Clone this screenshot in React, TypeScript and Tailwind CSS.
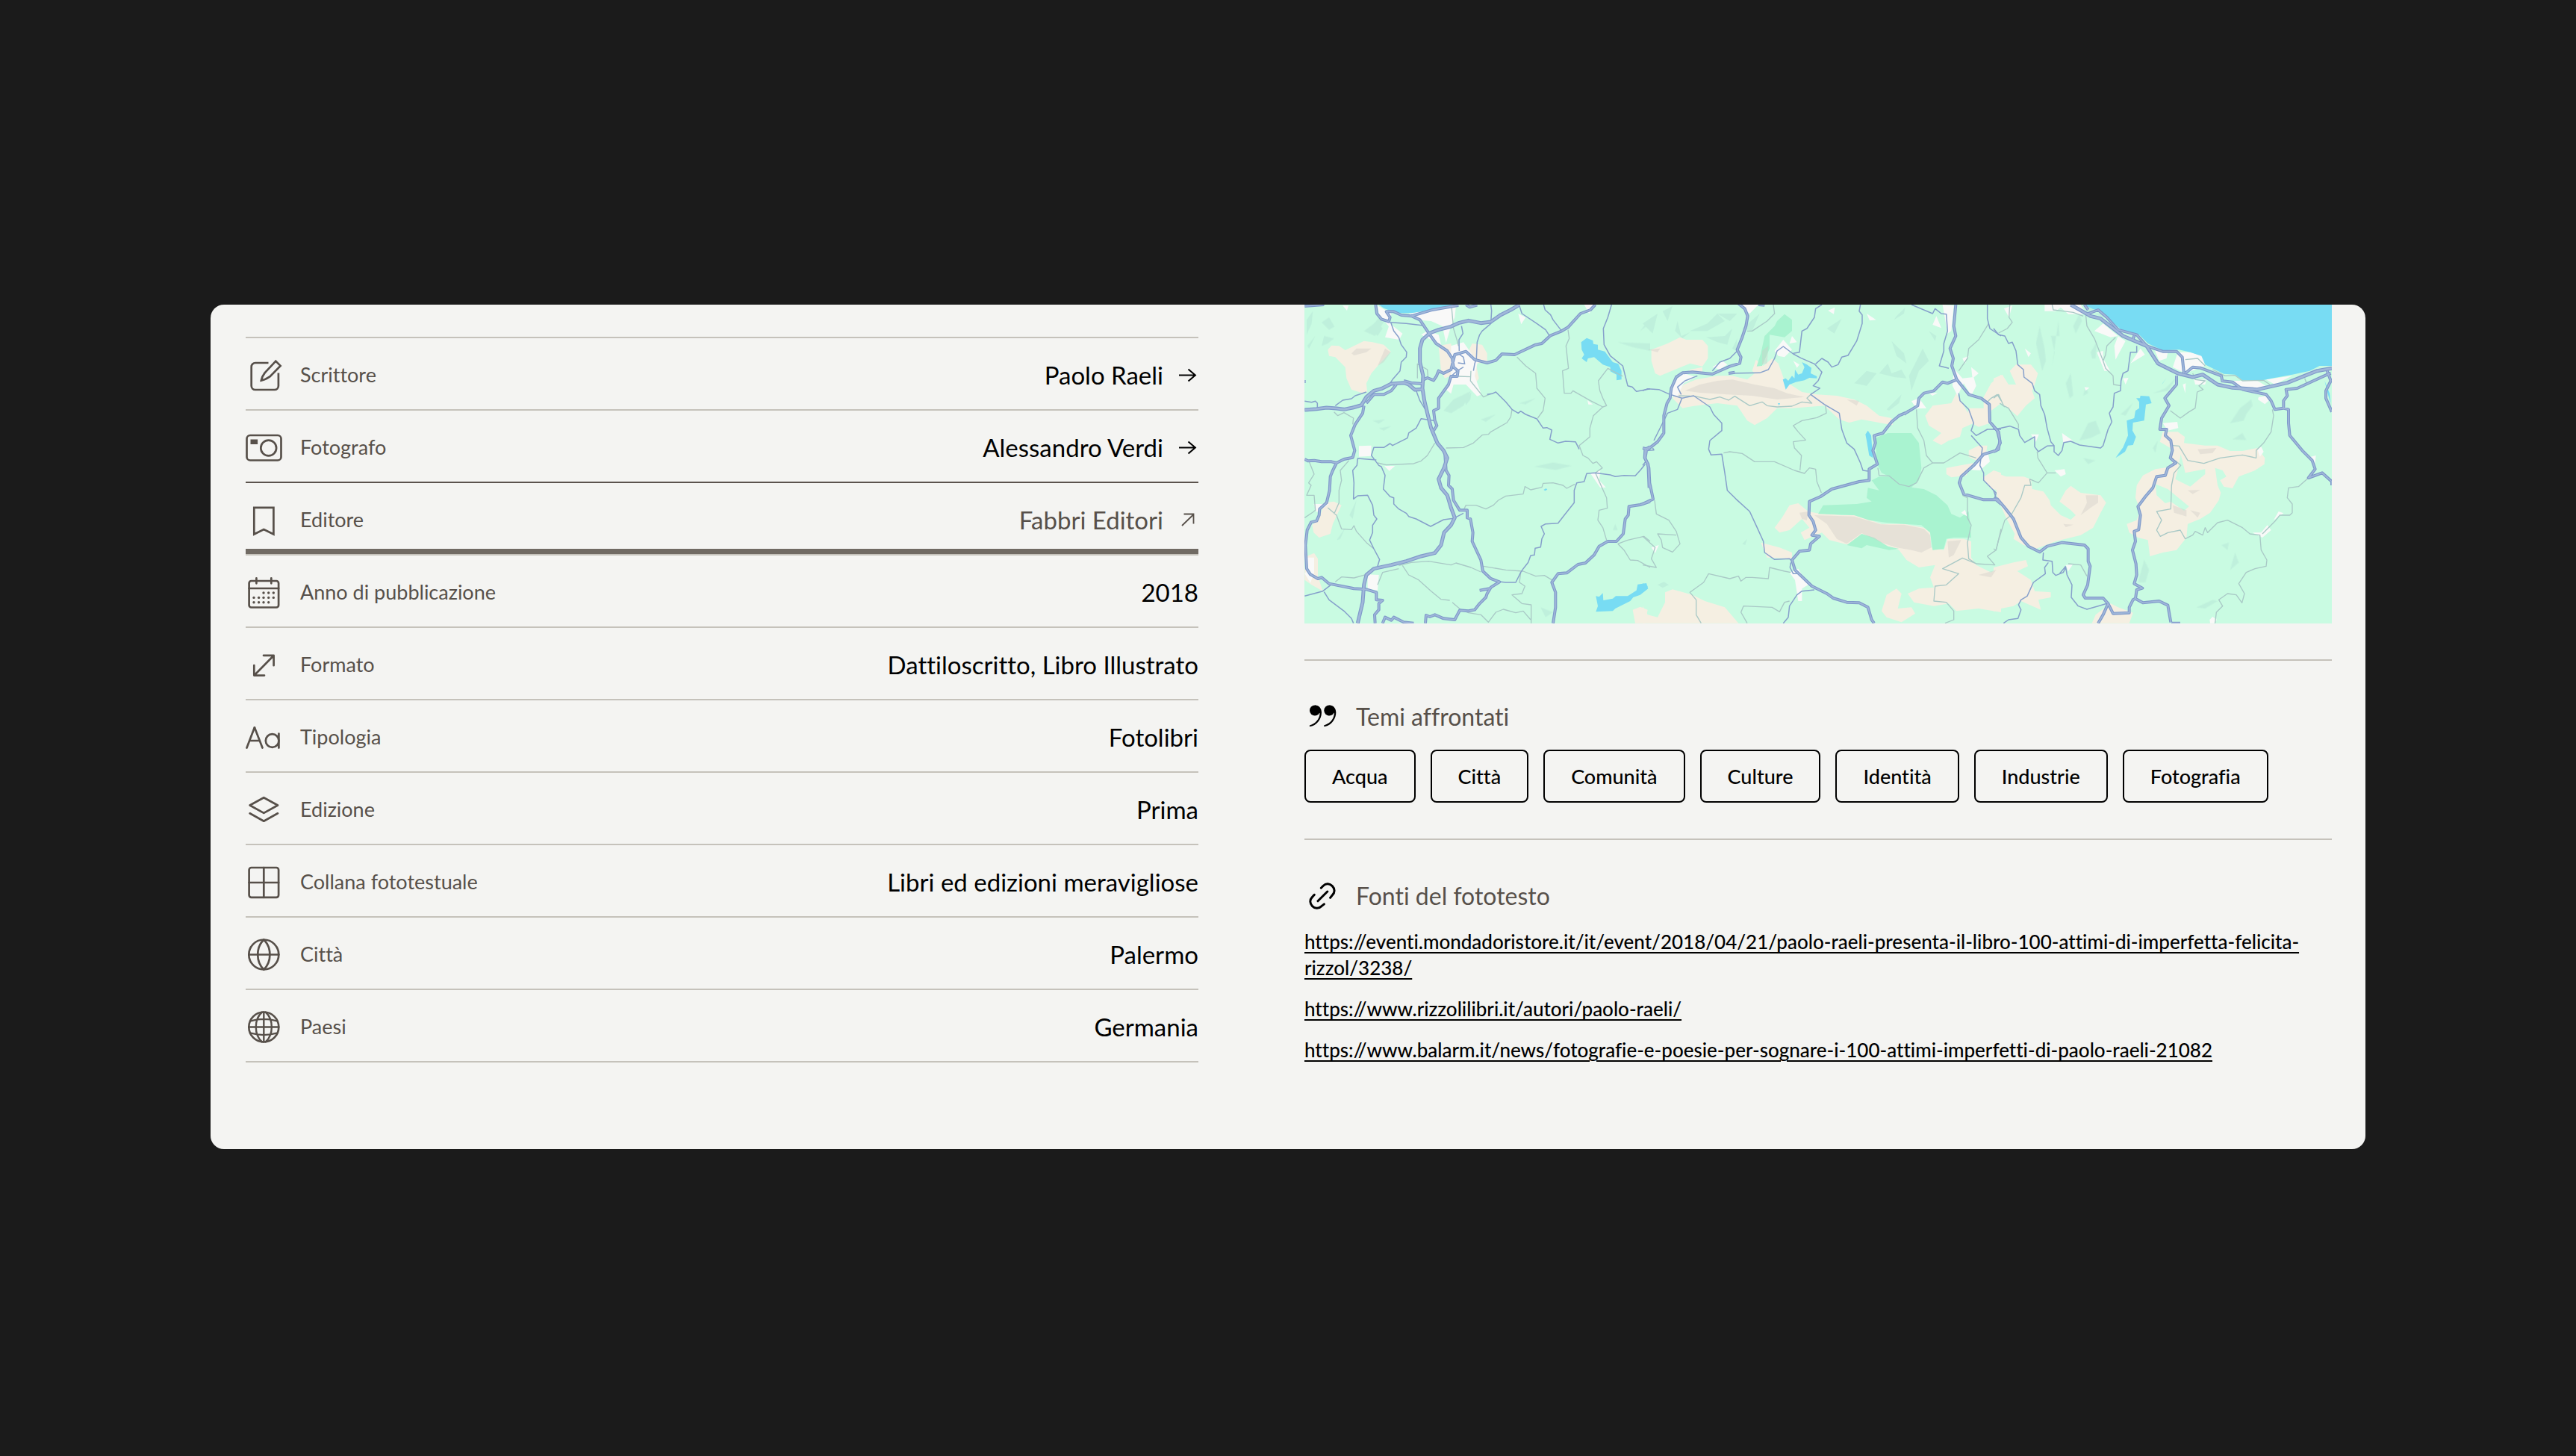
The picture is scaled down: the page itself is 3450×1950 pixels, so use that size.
import type { ReactNode } from "react";

/* ---------- row icons (49 x 49 box) ---------- */

function Icon({ children }: { children: ReactNode }) {
  return (
    <svg
      viewBox="0 0 49 49"
      className="size-[49px] shrink-0"
      fill="none"
      stroke="currentColor"
      strokeWidth="2.7"
      strokeLinecap="round"
      strokeLinejoin="round"
      aria-hidden="true"
    >
      {children}
    </svg>
  );
}

const EditIcon = () => (
  <Icon>
    <path d="M30.5 9H13a5.3 5.3 0 0 0-5.3 5.3v25.4A5.3 5.3 0 0 0 13 45h25.600a5.300 5.300 0 0 0 5.300-5.300V22.500" strokeLinecap="butt" />
    <path d="M20.800 32.600C21.300 29.500 23.300 25.500 25.600 22.400L40.300 6.600l6.300 6.300L32.400 27.400c-3.400 2.400-8 4.600-11.600 5.200Z" strokeLinejoin="miter" />
  </Icon>
);
const CameraIcon = () => (
  <Icon>
    <rect x="1.500" y="9" width="46" height="33.500" rx="4.600" />
    <rect x="6.500" y="14.500" width="9.600" height="6.500" fill="currentColor" stroke="none" />
    <circle cx="30.700" cy="26" r="10.400" />
  </Icon>
);
const BookmarkIcon = () => (
  <Icon>
    <path d="M11.300 8.900h26.100v35.600L24.300 38l-13 6.500Z" strokeLinejoin="miter" />
  </Icon>
);
const CalendarIcon = () => (
  <Icon>
    <rect x="4.600" y="10" width="39.500" height="35.500" rx="3" />
    <path d="M4.600 20h39.500M14.400 6.300v7M34.300 6.300v7" />
    <g fill="currentColor" stroke="none">
      {[
        [24, 26], [30.700, 26], [37.300, 26],
        [11, 32.400], [17.600, 32.400], [24, 32.400], [30.700, 32.400], [37.300, 32.400],
        [11, 38.800], [17.600, 38.800], [24, 38.800], [30.700, 38.800],
      ].map(([x, y]) => (
        <circle key={`${x}-${y}`} cx={x} cy={y} r="1.700" />
      ))}
    </g>
  </Icon>
);
const ResizeIcon = () => (
  <Icon>
    <path d="M11.500 39.500 37.500 13M24 12.800h13.600v13.400M25 39.600H11.300V26" />
  </Icon>
);
const TypeIcon = () => (
  <Icon>
    <line x1="1.500" y1="39.600" x2="11.900" y2="12.300" />
    <line x1="11.900" y1="12.300" x2="22.500" y2="39.600" />
    <line x1="5.500" y1="30" x2="18.500" y2="30" />
    <circle cx="35.600" cy="30" r="8.800" />
    <line x1="44.400" y1="20.500" x2="44.400" y2="39.600" />
  </Icon>
);
const LayersIcon = () => (
  <Icon>
    <path d="M24.300 9.200 43 19.500 24.300 29.900 5.600 19.500ZM5.600 30.300l18.700 10.400L43 30.300" />
  </Icon>
);
const GridIcon = () => (
  <Icon>
    <rect x="4.600" y="6" width="39.500" height="39.800" rx="3" />
    <path d="M24.300 6v39.800M4.600 26h39.500" />
  </Icon>
);
const GlobeIcon = () => (
  <Icon>
    <circle cx="24.300" cy="25.500" r="20" />
    <path d="M4.300 25.500h40M24.300 5.500C13.500 16 13.500 35 24.300 45.500M24.300 5.500C35.100 16 35.100 35 24.300 45.500" />
  </Icon>
);
const GlobeGridIcon = () => (
  <Icon>
    <circle cx="24.300" cy="25.500" r="20" />
    <path d="M4.300 25.500h40M24.300 5.500v40M22 5.500C11 15 11 36 22 45.500M26.600 5.500C37.600 15 37.600 36 26.600 45.500M7 17.300Q24.300 12.500 41.600 17.300M7 33.700Q24.300 38.500 41.600 33.700" strokeWidth="2.400" />
  </Icon>
);

function ArrowIcon({ external }: { external?: boolean }) {
  return (
    <svg viewBox="0 0 26 26" className="size-[26px] shrink-0" fill="none" stroke="currentColor" strokeWidth="2.100" aria-hidden="true">
      {external ? (
        <path d="M4 21 19.500 6M6.500 5.500h13v13" strokeWidth="1.800" />
      ) : (
        <path d="M0 13.500h22.500M12.500 5.500l9.300 8-9.300 8" />
      )}
    </svg>
  );
}

const QuoteIcon = () => (
  <svg viewBox="0 0 48 48" className="size-12 shrink-0" fill="currentColor" aria-hidden="true">
    {[0, 19.300].map((dx) => (
      <g key={dx} transform={`translate(${dx} 0)`}>
        <circle cx="14" cy="15.500" r="7" />
        <path d="M14 8.500c5.500 0 9 4 9 9.700C23 27.500 15.800 36 8 37c-1.600.200-1.800-1.400-.500-1.700C14.500 33 20 27.500 20.600 19.500Z" />
      </g>
    ))}
  </svg>
);
const LinkIcon = () => (
  <svg viewBox="0 0 48 48" className="size-12 shrink-0" fill="none" stroke="currentColor" strokeWidth="3" strokeLinecap="round" aria-hidden="true">
    <path d="M18 30.800 30.800 18M22.300 13.300l3-3c3.600-3.600 8.700-3 12 .300s3.900 8.400.300 12l-3 3.800M13.300 22.300l-3 3.300c-3.600 3.600-3 8.700.300 12s8.400 3.900 12 .300l3.800-3" />
  </svg>
);

/* ---------- map ---------- */

type Tile = {
  shift: string;
  beige: string;
  forest: string;
  shade: string;
  rock: string;
  town: string;
  water: string;
  grey: string;
  minor: string;
  road: string;
  highway: string;
};

const tiles: Tile[] = [
  {
    shift: "translate(-17 -8) scale(0.33333)",
    beige:
      "M145 205 160 188 190 190 215 207 250 190 290 170 325 175 370 185 398 212 350 265 320 300 300 340 303 375 280 378 240 365 220 320 215 275 175 235 150 230ZM590 190 640 180 660 300 615 320 600 290ZM725 180 765 185 785 220 785 255 740 260 752 320 735 345 700 330 715 200ZM130 820 170 815 200 830 165 905 155 945 110 960 88 940 82 910 112 880ZM52 1090 60 1035 90 1022 105 1045 105 1115 125 1175 80 1150 52 1130ZM1370 1250 1400 1238 1430 1250 1420 1304 1380 1304Z",
    forest: "",
    shade:
      "M60 85 85 50 80 100 60 145ZM120 95 150 75 172 112 150 125ZM290 130 330 100 372 50 375 85 335 150ZM120 190 145 180 170 160 130 150ZM610 450 650 405 720 372 690 430 640 460ZM695 410 722 375 718 405 700 428ZM975 675 1050 658 1125 672 1060 688ZM760 485 820 465 780 495ZM325 490 375 485 350 502ZM350 520 400 512 370 530ZM232 870 260 810 245 885ZM180 970 215 920 195 965ZM1290 930 1300 905 1310 930ZM915 420 980 400 940 425ZM1310 175 1440 180 1440 210 1370 195ZM1000 1240 1050 1260 1020 1280ZM1400 130 1430 90 1440 100ZM325 130 350 100 365 120 345 150ZM62 190 95 150 70 200Z",
    rock: "M240 220 260 200 320 200 300 215 250 228ZM345 270 375 200 398 215 370 255Z",
    town:
      "M345 28 400 60 395 100 445 140 432 165 375 155 390 112 350 60ZM470 60 590 40 660 26 655 75 640 110 620 178 605 110 560 90 500 85ZM545 130 590 145 605 205 560 165 520 145ZM640 190 690 175 725 225 748 250 735 310 762 385 745 392 700 345 650 345 640 382 620 365 640 300ZM270 592 320 590 318 632 270 635ZM910 60 940 75 922 103ZM305 1108 350 1110 345 1172 305 1165ZM372 672 415 672 392 692ZM1200 702 1240 690 1235 730 1262 758 1240 760ZM88 825 150 825 100 858ZM62 1040 90 1040 90 1100 75 1142 52 1105 65 1090ZM1175 24 1220 24 1195 60ZM1188 408 1210 425 1192 425ZM205 28 228 28 222 48Z",
    water:
      "M350 24 650 24 560 46 480 58 420 58 370 38ZM1163 175 1185 158 1210 168 1212 182 1230 185 1230 205 1258 212 1290 255 1312 262 1325 290 1325 325 1305 328 1305 305 1280 292 1280 275 1250 265 1215 235 1190 240 1185 255 1165 240 1175 225 1165 205ZM1222 1195 1235 1198 1250 1183 1252 1212 1290 1205 1302 1195 1350 1195 1385 1172 1390 1148 1425 1143 1432 1165 1400 1190 1372 1200 1360 1215 1300 1245 1290 1255 1222 1258 1230 1235ZM1012 768 1022 762 1027 767 1018 772Z",
    grey:
      "M905 235 940 270 980 300 985 360 1018 400 1010 450 988 480M885 445 880 475 865 498 800 535 790 545 765 548 730 580 690 598 620 600M575 580 545 630 520 652 490 663 380 668 345 660M1110 125 1115 160 1102 190 1112 280 1088 290 1095 380 1122 380 1130 370 1200 410 1250 435 1212 470 1198 520 1198 555 1155 590 1170 630 1190 640 1210 662 1225 655 1248 680 1220 700 1265 800 1268 842 1235 850 1230 890 1250 920 1265 970M1330 312 1270 280 1232 330 1238 370 1250 400 1265 430 1250 435M1138 745 1105 762 1090 750 1050 740 1010 742 1005 758 960 768 937 755 930 785 860 793 830 810 810 830 780 845 740 830 700 830 690 850M170 455 185 470 210 458 248 480 245 505M230 650 195 690 200 730 190 770 190 820 170 865M145 840 180 870 200 925 240 928 250 912 260 935 300 980 330 1005M52 880 85 858 95 850 90 790 60 790 78 750 68 740 90 705 70 655M175 1138 200 1118 250 1122 300 1108M430 1072 480 1060 550 1055 640 1070 660 1062 720 1080 760 1098M445 1072 470 1110 510 1130 560 1175 600 1208 635 1212M645 1220 680 1250 710 1262 760 1270 790 1300 820 1260 850 1248 900 1262 930 1255 960 1290M770 1075 860 1090 930 1095 980 1115 1015 1112 1045 1130M920 1100 915 1140 937 1155 925 1185 885 1190 925 1225 962 1230 962 1304M642 30 650 120 665 170 670 190M720 290 718 330 770 395 800 382M1310 985 1335 1010 1360 1050 1390 1052 1440 1080M1310 985 1350 970 1415 955 1440 975M430 1085 365 1100 345 1150M505 320 505 262 545 285 548 320M670 312 720 314",
    minor:
      "M395 95 460 100 530 108M398 95 410 130 430 155 440 185 462 215 460 235 440 255 435 290 405 325 395 340M500 370 515 410 540 450M300 375 255 390 240 402 205 408 175 430M52 412 80 416 95 412 103 420 103 438M682 110 688 140 672 165 673 210M800 24 803 48 800 100 765 130 755 145 745 175 742 240 735 262 730 290M915 30 925 60 985 100 1020 125 1035 148M1012 24 1018 45 1040 65 1050 85 1083 128M1285 24 1270 75 1252 120 1255 185 1280 230 1330 270 1350 350 1368 355 1385 373 1440 362M785 385 805 382 820 375 860 415 885 445 910 460 920 452 940 465 985 483 1010 520 1025 518 1045 528 1037 565 1070 580 1100 573 1140 575 1155 605M570 490 520 482 500 520 470 540 465 560 405 590 395 582 370 598 330 598 320 630 335 650 350 670 360 675 375 710 368 765 395 795 410 800 410 825 430 845 460 862 470 875 500 885 558 915 610 888 650 883 690 862M340 648 265 642 262 670 245 690 250 740 248 805 265 792 305 790 325 830 330 870 342 885 325 910 325 940 313 970 330 1005 353 1048 345 1075M1218 700 1185 703 1175 735 1145 740 1135 770 1135 820 1095 870 1070 902 1020 905 1002 915 1015 945 1005 965 1000 998 978 1003 975 1030 960 1032 950 1060 930 1085 920 1100 900 1140 860 1140 840 1138M1218 700 1280 708 1300 715 1335 710 1380 712 1400 690 1420 665M52 1195 125 1175 160 1148M130 1178 150 1210 210 1255 240 1285 248 1304M668 258 695 262 690 235 675 225M640 312 665 290 690 275",
    road:
      "M337 24 342 60 360 82 390 92 395 75 380 52 410 52 440 66 480 70 560 46 620 35 670 27M478 68 515 85 555 145 580 180 625 210 645 240 650 275 668 290 665 312 640 312 630 345 590 400 590 440 570 450 575 490 583 510 570 530M530 325 545 318 570 328 582 310 590 290 610 300 640 285 655 225 700 212 735 245 785 258 820 248 845 222 895 225 980 185 1005 180 1040 148 1085 130 1110 115 1160 60 1200 45 1220 24M615 615 620 690 632 710 630 750 645 765 650 810 675 850 705 850 705 880 718 885 728 940 725 975 760 1050 768 1095 800 1125 835 1138 800 1160 785 1185 780 1200 755 1225 735 1250 710 1255 675 1252 655 1290 610 1285 575 1270 555 1278 540 1272 537 1304M755 1172 795 1165M290 430 285 460 255 505 237 550 245 580 253 610 245 638 210 645 180 660 160 655 120 655 90 650 65 652 52 645M180 660 165 690 155 715 152 770 140 820 112 845 110 870 100 893 78 898 62 930 55 990 60 1085 75 1108 105 1125 120 1120 150 1145 250 1165 300 1168 340 1180 340 1210 365 1212 350 1225 350 1250 333 1270 335 1304M365 1304 375 1280 400 1292 410 1280 450 1300 490 1304M1050 1304 1060 1240 1060 1180 1045 1140 1070 1105 1105 1102 1150 1068 1180 1062 1215 1030 1235 995 1270 975 1305 975 1332 945 1340 885 1352 870 1355 835 1400 828 1440 815M1440 595 1420 605 1418 640 1432 665 1436 760M52 30 130 24M700 24 715 34 745 26M450 330 480 338 528 342M300 420 330 385 370 385 400 370 420 345M52 333 56 333",
    highway:
      "M52 447 100 443 140 438 180 441 210 445 245 438 280 428 300 395 330 370 360 362 400 342 450 338 470 345 495 366 528 364M915 24 880 45 840 65 800 93 760 98 710 88 670 98 640 112 590 125 555 138 525 165 515 200 515 255 528 310 525 360 533 410 545 460 560 520 585 580 610 610 625 640 612 680 590 725 600 760 625 790 640 840 655 880 640 910 612 940 600 990 575 1022 520 1035 460 1055 400 1070 330 1085 300 1110 290 1150 285 1220 265 1304",
  },
  {
    shift: "translate(453 -8) scale(0.33333)",
    beige:
      "M35 205 75 190 100 180 150 155 175 165 240 165 262 190 262 240 240 272 190 260 130 285 70 310 50 300 35 250ZM120 400 165 345 215 325 300 310 360 310 420 325 450 300 440 290 455 245 485 270 520 240 545 260 570 330 640 375 700 385 780 390 850 405 900 430 950 470 1000 480 1005 508 960 500 880 485 830 498 790 485 730 430 600 440 540 440 500 480 450 508 420 490 380 430 300 420 200 432 160 440ZM190 285 240 275 240 300 180 300ZM530 920 560 880 590 830 625 822 665 855 700 862 800 870 850 870 900 885 960 905 1050 905 1130 920 1155 940 1160 1000 1210 1010 1225 965 1290 965 1320 975 1320 1040 1340 1070 1400 1100 1440 1075 1440 1260 1350 1245 1260 1255 1230 1225 1170 1235 1090 1220 1065 1185 1110 1165 1170 1160 1155 1120 1175 1070 1110 1080 1060 1050 1030 1010 960 985 880 945 830 990 750 970 720 940 650 970 635 940 670 920 640 885 590 930 550 940ZM475 980 550 1000 600 1020 600 1045 500 1040ZM1135 470 1165 430 1240 420 1260 380 1290 430 1330 500 1285 520 1275 555 1230 570 1200 588 1165 570 1200 540 1150 510ZM1370 395 1400 340 1440 305 1440 420 1400 450 1395 500 1350 515 1300 490 1310 440 1370 440ZM1310 610 1350 590 1385 590 1380 620 1340 650 1310 635ZM1220 680 1330 660 1300 710 1240 718 1220 705ZM1365 720 1410 690 1440 700 1440 770 1400 765ZM0 1235 20 1270 60 1280 90 1220 90 1180 120 1168 200 1190 250 1215 330 1240 385 1304 0 1304ZM980 1190 1020 1165 1040 1185 1025 1245 1080 1240 1095 1265 1040 1300 980 1280 960 1255Z",
    forest:
      "M540 90 570 62 600 85 600 130 570 155 510 145 510 200 480 270 458 272 475 220 490 150 530 110ZM935 560 985 540 1080 540 1110 580 1120 680 1110 730 1080 758 1130 765 1180 790 1225 830 1240 865 1275 880 1310 855 1320 960 1250 960 1220 965 1210 1005 1165 1010 1155 940 1120 910 1050 905 980 900 910 890 850 870 705 865 725 830 860 825 920 815 900 800 905 760 950 770 920 730 950 715 990 715 960 700 940 660ZM820 990 880 945 930 960 985 995 1030 1005 990 1010 900 990 880 1003Z",
    shade:
      "M130 130 140 90 155 150 190 135 160 160ZM190 130 260 100 300 60 330 90 260 130ZM255 155 330 150 360 120 340 185 300 175ZM0 100 60 60 40 140ZM80 50 120 30 100 90ZM950 300 985 260 1000 300 1040 285 1060 320 1010 315ZM1000 170 1050 220 1060 260 1020 230ZM1070 310 1110 230 1125 200 1150 250 1110 290 1080 370ZM1020 70 1055 35 1050 60 1010 85ZM980 445 1040 385 1030 420 990 450ZM850 340 900 290 940 300 900 350ZM740 120 800 80 770 140ZM400 120 470 60 440 130ZM380 60 350 90 300 60ZM910 780 955 775 950 805ZM60 1150 85 1138 105 1150 80 1162ZM400 985 420 965 412 990ZM360 200 380 160 375 210ZM700 860 850 850 880 865ZM1180 150 1150 130 1175 170Z",
    rock:
      "M170 370 230 345 300 330 360 325 450 345 530 360 580 380 650 395 600 400 540 405 440 390 340 385 230 378ZM820 405 870 410 860 430ZM690 870 850 875 900 890 960 908 1050 908 1130 925 1155 950 1160 1000 1120 1020 1080 1010 1020 1000 960 980 880 942 820 985 780 965 740 905ZM870 915 940 905 1050 912 1120 930 1145 960 1090 975 1010 955 930 935ZM990 925 1040 918 1055 945 1020 948ZM1225 975 1280 970 1250 1030 1230 1040ZM1350 1110 1420 1090 1400 1120ZM480 210 505 190 500 260 480 265ZM490 380 545 385 545 398 500 398ZM630 860 665 855 660 890 640 885ZM20 205 70 200 60 215Z",
    town:
      "M385 24 465 24 430 60ZM110 350 140 320 165 300 215 315 165 340 140 390 115 395ZM280 275 320 250 340 265 310 285ZM530 210 565 165 600 205 570 235 545 230ZM590 180 600 150 620 175ZM605 250 630 265 620 278ZM745 48 772 35 768 62ZM900 60 938 85 912 88ZM1205 24 1250 28 1240 130 1225 140ZM1165 105 1180 70 1200 118ZM1250 280 1285 320 1330 315 1340 350 1320 390 1290 340 1265 390 1245 350ZM1320 275 1350 300 1325 320ZM1080 412 1110 400 1140 440 1100 442ZM1360 640 1385 610 1395 655 1355 690 1320 688ZM590 1100 625 1085 665 1150 640 1165 640 1215 625 1215 612 1130ZM35 1000 65 990 50 1022ZM1280 860 1295 848 1305 875ZM1150 380 1185 378 1165 390ZM1285 240 1310 230 1295 262Z",
    water:
      "M563 325 575 320 585 330 600 310 610 320 612 285 625 305 640 300 650 275 640 255 660 265 678 278 675 300 700 312 700 320 670 318 650 328 615 335 590 345 575 365ZM895 545 905 530 918 550 925 640 910 630 900 570ZM0 1143 20 1155 12 1172 0 1178ZM543 420 552 420 548 430Z",
    grey:
      "M525 24 530 60 500 90 440 130 420 130M145 390 210 392 270 405 310 395 345 408 370 392 430 430 480 415 500 430 540 435 600 432 640 415 680 420 660 400 680 380M735 430 738 460 700 478 640 490 605 510 625 535 655 568 605 575 610 600 638 630 632 690M325 620 350 615 400 622 450 655 530 655 610 690 650 702 670 680 695 685 700 735 718 780M1100 445 1105 520 1130 570 1140 630 1165 660 1210 660 1275 620 1340 640M945 680 950 710 990 712 1030 745 1070 755 1100 740 1130 680 1165 660M1390 100 1350 165 1310 200 1305 240 1270 290M1285 790 1305 800 1305 880 1320 910 1305 980 1310 1045 1340 1065 1415 1070 1385 1035 1420 1010 1440 925M1340 1065 1285 1042 1205 1085 1270 1105 1220 1150 1175 1155 1170 1215 1220 1220 1250 1255 1250 1290 1215 1304M48 810 55 865 105 890 135 935 150 985 120 1018 80 1000 75 970 60 945 135 950M0 955 50 1000 35 1045 55 1080 0 1070M595 1100 570 1095 510 1080 505 1125 440 1120 415 1120 395 1135 385 1115 350 1125 265 1105 245 1140 190 1180 215 1210 215 1270 235 1304M590 1215 570 1220 550 1258 520 1240 405 1235 395 1260 420 1304M1380 420 1400 400 1425 385 1440 410",
    minor:
      "M0 370 20 362 65 365 110 385 158 400 205 390 270 435 285 465 318 500 318 530 270 570 265 605 275 628 318 625 330 700 340 770 375 805 430 855 460 920 485 975 490 1020 530 1048 590 1045 600 1055M158 400 140 445 100 460 75 510 45 570M155 385 140 355 170 330 220 310M345 300 470 298 505 285 530 240 540 210 565 192 605 222 635 238 690 262 720 295 705 330 685 350 712 360 675 385 730 425 790 460 800 525 820 580 850 605 875 660 885 690 905 693M605 220 630 215 640 130 660 120 690 75 695 40 720 24M695 262 720 240 745 255 760 275 785 265 800 235 825 228 860 170 882 100 882 65 870 50 875 24M1080 24 1165 60 1175 40 1200 60 1220 62 1225 130 1210 180 1210 210 1192 270 1230 280M1270 380 1275 410 1310 445 1330 500 1320 530 1340 550 1385 525 1440 525M1320 550 1365 600 1355 670 1370 700 1370 730 1410 770 1420 800M1385 24 1385 80 1395 120 1440 150M690 1170 640 1175 620 1190 590 1235 585 1280 565 1304M595 1060 592 1080 605 1105 620 1105M280 290 310 255 350 240 380 210M0 670 12 655M20 610 45 608 40 600",
    road:
      "M385 20 410 40 422 70 415 110 400 155 380 205 395 235 390 260 350 272 280 303 200 295 160 298 135 315 115 360 110 400 98 420 85 470 85 540 60 575 15 610 10 640 25 680 28 740 42 805 0 825M1258 24 1250 110 1258 150 1235 200 1248 240 1242 270 1262 325 1225 340 1205 335 1170 370 1130 380 1110 400 1105 430 1065 455 1030 470 1000 495 965 540 930 550 935 580 925 610 943 665 910 685 910 730 870 735 760 765 715 795 670 815 668 870 685 895 695 930 680 950 710 955 675 985 670 1010 630 1015 600 1050 612 1090 680 1155 740 1185 765 1203 820 1220 870 1222 905 1240 920 1290 930 1304M1262 325 1310 385 1360 400 1393 425 1395 495 1425 530 1437 580 1420 610 1370 625 1330 670 1280 715 1272 740 1290 785 1370 808 1420 808 1440 825M0 600 20 605M465 24 490 26M370 296 345 300M1050 465 1070 450",
    highway: "",
  },
  {
    shift: "translate(923 -8) scale(0.33333)",
    beige:
      "M65 290 90 265 150 265 178 300 165 345 155 370 165 400 130 430 95 472 60 440 30 420 0 410 0 320 35 305 60 345 90 345ZM0 695 50 715 120 715 150 725 155 765 200 775 225 810 230 830 270 870 310 888 330 870 310 850 265 815 290 770 310 752 350 780 430 790 452 820 430 860 400 920 350 950 250 975 170 1005 120 990 80 965 85 945 50 880 15 800ZM0 1080 80 1060 130 1050 138 1075 95 1095 150 1130 165 1175 230 1180 230 1200 180 1210 190 1250 110 1215 80 1235 30 1245 0 1258ZM395 1304 410 1270 470 1225 500 1240 560 1262 545 1304ZM668 575 680 535 740 535 768 555 765 580 850 590 900 590 950 612 1000 612 1060 600 1090 640 1088 665 1050 690 985 715 960 762 925 755 910 730 935 715 920 690 890 680 900 750 913 780 905 810 870 860 830 885 780 905 775 960 735 1010 680 1020 628 1035 620 970 580 960 545 940 535 905 575 890 590 850 570 800 575 750 600 710 650 685 720 675 710 600Z",
    forest: "",
    shade:
      "M170 180 185 110 205 200 210 250 195 290ZM235 270 245 215 230 150 265 150 260 90ZM345 570 380 500 410 490 430 540 390 560ZM320 110 345 60 355 90 330 140ZM390 215 415 170 410 240 395 240ZM950 500 990 440 1035 405 1040 430 1015 465 1005 490ZM960 565 1000 540 1015 568ZM700 370 740 310 690 360 640 380ZM510 465 560 420 530 470ZM580 1140 605 1050 625 1090 610 1140ZM815 1240 880 1210 900 1215 850 1245ZM950 1090 970 1020 985 1060ZM640 600 660 570 650 620ZM290 340 310 300 320 390 305 400ZM490 90 450 60 400 60ZM380 20 420 40 370 60ZM360 390 370 350 380 380ZM940 1010 915 990 945 980ZM360 640 410 650 380 665Z",
    rock:
      "M350 870 375 820 370 790 420 790 420 820 390 840ZM820 605 895 600 880 620 830 625ZM720 830 775 850 775 875 725 860ZM780 770 830 768 800 785ZM280 905 320 908 290 918ZM790 850 830 860 820 880Z",
    town:
      "M205 24 350 24 370 62 300 62 270 35 250 50 205 50ZM42 40 75 28 62 75ZM405 130 440 100 500 150 470 155ZM485 190 500 150 530 170 490 245ZM415 215 440 210 440 240 468 290 445 290ZM645 200 700 215 695 240 665 250ZM550 260 590 200 608 225ZM740 215 790 215 840 230 850 270 770 300 720 275ZM805 325 855 325 850 345 810 345ZM955 330 1060 330 1110 360 1020 365ZM1065 395 1100 390 1105 410 1090 424 1062 405ZM680 500 738 495 742 520 700 530ZM275 540 318 570 280 580ZM125 200 150 220 140 235ZM245 690 285 685 290 705 270 715ZM1060 605 1075 595 1085 615 1070 635ZM1275 635 1295 630 1290 670ZM1040 940 1075 940 1100 910 1115 930 1080 960ZM1125 890 1145 855 1165 862ZM290 1070 318 1068 300 1095ZM868 1290 880 1278 897 1290 885 1304 870 1304ZM150 545 182 545 170 575ZM365 355 385 358 370 370ZM760 345 772 340 770 380ZM1095 325 1200 310 1130 345ZM520 320 542 318 530 345Z",
    water:
      "M360 24 1359 24 1359 270 1310 270 1270 290 1200 305 1130 318 1080 328 1000 328 970 305 925 302 890 285 850 265 835 230 790 215 745 205 680 208 620 180 585 145 545 140 510 122 480 95 430 50 400 42ZM573 400 588 400 590 390 625 392 635 420 612 425 605 490 560 498 558 530 572 555 560 588 540 590 528 615 505 630 490 640 520 598 540 550 535 490 565 480 570 450 585 440 585 415ZM675 345 695 318 680 340ZM1330 330 1350 380 1355 420 1345 390Z",
    grey:
      "M65 24 62 75 75 95 55 120 20 138M370 62 375 110 405 160 440 250 450 280 480 310 482 345 512 350M490 155 455 190 450 225 440 250M235 24 240 45 320 55 360 70M710 450 750 480 785 455 810 440 818 375 842 365 825 350 850 330 810 325 800 300M770 245 820 240 850 270M880 285 930 310 970 308 1000 330 1085 328 1110 345M1120 445 1125 470 1115 535 1085 580 1055 610 1055 640 1000 628 910 640 845 662 780 650 745 592 720 590M730 650 752 670 725 700 715 750 712 845 655 855 675 890 655 930 670 955 700 940 750 930 770 965 800 950 810 935 840 950 850 920 860 940 900 900 940 890 1000 920 1030 945 1070 950 1075 1010 1098 1050 1095 1075 1050 1085 1015 1100 985 1145 1008 1185 998 1222 975 1190 940 1185 905 1210 920 1235 895 1260 890 1304M1080 945 1130 895 1150 870 1190 870 1200 860 1200 825 1180 800 1185 760 1225 755 1265 720M0 400 20 385 40 430 60 440 100 505 100 520M175 615 178 640 215 700 250 700M215 700 180 740 145 725 150 750 125 750 110 800 70 870 45 890 20 970 10 1010 0 1005M300 1065 350 1070 375 1115M25 420 45 435M1250 320 1257 338",
    minor:
      "M0 120 20 145 45 150 60 180 75 175 90 210 97 265 120 285 122 315 155 340 165 370 185 385 190 430 205 465 215 520 230 575 243 590 243 615 260 630 275 610 282 578 310 573 345 588 430 600 440 590 460 525 475 495 465 460 480 435 485 380 510 370 512 330 520 300 540 290 550 215 575 215 575 190M0 525 30 520 65 512 100 525 105 550 125 578 165 555 165 595 180 615 215 592 243 590M0 770 10 780 5 800M200 1020 198 1050 235 1055 238 1100 250 1112 280 1100 290 1080 295 1110 315 1150 312 1200 340 1235 375 1248 420 1235 455 1225M220 1060 205 1080 208 1105 160 1140 135 1195 110 1210 100 1230 110 1250 98 1285 60 1290 40 1304M265 1105 290 1075",
    road:
      "M0 805 15 805 45 840 80 885 110 960 140 995 185 1018 215 995 275 980 365 990 380 1005 380 1055 388 1075 378 1150 360 1190 368 1203 440 1203 460 1225 480 1265 545 1262 545 1240 560 1210 570 1205 575 1170 598 1163 565 1145 575 1110 572 1065 558 1010 570 975 565 935 583 928 590 870 580 835 610 795 640 760 655 715 690 710 700 680 732 660 710 640 718 610 712 570 690 550 695 525 668 525 675 480 690 455 705 430 688 400 735 345 735 310M570 1205 600 1222 665 1215 700 1232 712 1300M460 1225 440 1270 420 1304M380 45 365 24M375 62 420 45 455 75 500 125 575 145 615 190 680 212 735 212 758 235 765 300M560 165 565 148M770 300 800 275 830 278 915 310 920 335M915 330 960 335 1000 365M1000 365 1095 385 1115 410 1130 445 1165 440 1165 410 1180 390 1175 365 1220 360 1340 305 1355 300M1165 440 1185 445 1185 500 1190 550 1240 610 1280 650 1292 685 1265 720 1320 700 1359 735 1359 750M1340 290 1355 330 1335 370 1335 400 1359 455M0 515 20 535 25 570 20 605 0 615M715 1304 750 1304",
    highway:
      "M310 24 390 70 430 80 520 150 615 190 660 260 740 300 800 315 840 305 900 345 960 358 1060 365 1180 338 1300 290 1359 280",
  },
];

/* green clearings inside the eastern hills */
const clearings =
  "M752 625 770 700 850 685 850 705 790 755 730 725 740 690ZM650 745 700 765 785 835 765 852 712 815 690 822 655 790Z";

function MapLayer({ layer, className, width }: { layer: Exclude<keyof Tile, "shift">; className: string; width?: number }) {
  return (
    <g className={className} strokeWidth={width} strokeLinejoin="round">
      {tiles.map((t) => (t[layer] ? <path key={t.shift} transform={t.shift} d={t[layer]} /> : null))}
    </g>
  );
}

function RoadMap() {
  return (
    <svg viewBox="0 0 1376 427" preserveAspectRatio="xMidYMid slice" className="block h-[427px] w-full bg-[#c9fbe2]" role="img" aria-label="Mappa">
      <MapLayer layer="shade" className="fill-[#bdeedb] opacity-80" />
      <MapLayer layer="beige" className="fill-[#f5efe2]" />
      <path transform={tiles[2].shift} d={clearings} className="fill-[#c9fbe2]" />
      <MapLayer layer="forest" className="fill-[#a9f3d0]" />
      <MapLayer layer="rock" className="fill-[#d0cdc8]/40" />
      <MapLayer layer="town" className="fill-[#f9f9f8]" />
      <MapLayer layer="water" className="fill-[#78dcf3]" />
      <MapLayer layer="grey" className="fill-none stroke-[#a9c9c6]" width={4} />
      <MapLayer layer="minor" className="fill-none stroke-[#86a0cb]" width={4.5} />
      <MapLayer layer="road" className="fill-none stroke-[#7f9aca]" width={12} />
      <MapLayer layer="highway" className="fill-none stroke-[#7f9aca]" width={15} />
      <MapLayer layer="road" className="fill-none stroke-[#a1b8da]" width={5} />
      <MapLayer layer="highway" className="fill-none stroke-[#a1b8da]" width={8} />
    </svg>
  );
}

/* ---------- details ---------- */

type Detail = { icon: () => ReactNode; label: string; value: string; link?: "internal" | "external" };

const details: Detail[] = [
  { icon: EditIcon, label: "Scrittore", value: "Paolo Raeli", link: "internal" },
  { icon: CameraIcon, label: "Fotografo", value: "Alessandro Verdi", link: "internal" },
  { icon: BookmarkIcon, label: "Editore", value: "Fabbri Editori", link: "external" },
  { icon: CalendarIcon, label: "Anno di pubblicazione", value: "2018" },
  { icon: ResizeIcon, label: "Formato", value: "Dattiloscritto, Libro Illustrato" },
  { icon: TypeIcon, label: "Tipologia", value: "Fotolibri" },
  { icon: LayersIcon, label: "Edizione", value: "Prima" },
  { icon: GridIcon, label: "Collana fototestuale", value: "Libri ed edizioni meravigliose" },
  { icon: GlobeIcon, label: "Città", value: "Palermo" },
  { icon: GlobeGridIcon, label: "Paesi", value: "Germania" },
];

function DetailRow({ icon: RowIcon, label, value, link }: Detail) {
  const external = link === "external";
  const beforeExternal = label === "Fotografo";
  return (
    <div
      className={`flex h-[97px] items-center justify-between border-b-2 pt-0.5 ${
        beforeExternal ? "border-[#5b534d]" : "border-[#c5c2bb]"
      } ${external ? "shadow-[inset_0_-7px_0_#706a63]" : ""}`}
    >
      <dt className="flex items-center gap-6 text-[27px] leading-9 text-[#57504a]">
        <RowIcon />
        {label}
      </dt>
      <dd className={`text-[33px] leading-10 ${external ? "text-[#57504a]" : "text-black"}`}>
        {link ? (
          <a href="#" className="flex items-center gap-[21px]">
            {value}
            <ArrowIcon external={external} />
          </a>
        ) : (
          value
        )}
      </dd>
    </div>
  );
}

const topics = ["Acqua", "Città", "Comunità", "Culture", "Identità", "Industrie", "Fotografia"];

const sources = [
  "https://eventi.mondadoristore.it/it/event/2018/04/21/paolo-raeli-presenta-il-libro-100-attimi-di-imperfetta-felicita-rizzol/3238/",
  "https://www.rizzolilibri.it/autori/paolo-raeli/",
  "https://www.balarm.it/news/fotografie-e-poesie-per-sognare-i-100-attimi-imperfetti-di-paolo-raeli-21082",
];

function Block({ icon, title, children }: { icon: ReactNode; title: string; children: ReactNode }) {
  return (
    <section className="mt-12 border-t-2 border-[#c5c2bb] pt-[51px]">
      <h2 className="mb-5 flex h-12 items-center gap-[21px] text-[32px] font-normal leading-10 text-[#57504a]">
        <span className="text-black">{icon}</span>
        {title}
      </h2>
      {children}
    </section>
  );
}

export default function App() {
  return (
    <main className="flex min-h-screen items-center bg-[#1b1b1b] px-[282px] pb-[3px] font-['Lato',sans-serif] text-black [font-variant-ligatures:none]">
      <article className="grid w-full grid-cols-[1276fr_1376fr] gap-x-[142px] overflow-hidden rounded-[18px] bg-[#f4f4f2] pl-[47px] pr-[45px]">
        <dl className="mb-[116px] mt-[43px] border-t-2 border-[#c5c2bb]">
          {details.map((d) => (
            <DetailRow key={d.label} {...d} />
          ))}
        </dl>

        <div>
          <RoadMap />

          <Block icon={<QuoteIcon />} title="Temi affrontati">
            <ul className="flex flex-wrap gap-5">
              {topics.map((t) => (
                <li key={t}>
                  <button type="button" className="h-[71px] rounded-lg border-2 border-black px-[35px] text-[27px] font-medium leading-9">
                    {t}
                  </button>
                </li>
              ))}
            </ul>
          </Block>

          <Block icon={<LinkIcon />} title="Fonti del fototesto">
            <ul className="flex flex-col gap-5 text-[26px] font-medium leading-[35px]">
              {sources.map((s) => (
                <li key={s}>
                  <a href={s} className="break-words underline decoration-2 underline-offset-4">
                    {s}
                  </a>
                </li>
              ))}
            </ul>
          </Block>
        </div>
      </article>
    </main>
  );
}
